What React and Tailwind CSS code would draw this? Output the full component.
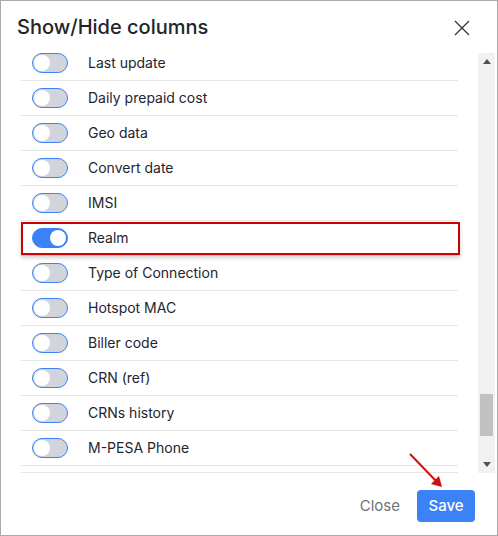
import React from "react";

const items = [
  "Last update",
  "Daily prepaid cost",
  "Geo data",
  "Convert date",
  "IMSI",
  "Realm",
  "Type of Connection",
  "Hotspot MAC",
  "Biller code",
  "CRN (ref)",
  "CRNs history",
  "M-PESA Phone",
];

function Toggle({ on }) {
  return (
    <div
      className={
        "w-[36px] h-[20px] rounded-full border border-[#3b82f6] flex items-center px-[1px] " +
        (on ? "bg-[#3b82f6] justify-end" : "bg-[#d1d5db] justify-start")
      }
    >
      <div className="w-[16px] h-[16px] rounded-full bg-white" />
    </div>
  );
}

export default function App() {
  return (
    <div
      className="w-[498px] h-[536px] border border-[#a9a9a9] bg-white flex flex-col relative"
      style={{ fontFamily: "Inter, 'Noto Sans', sans-serif" }}
    >
      <div className="h-[52px] flex items-center justify-between pl-[16px] pr-[27px] shrink-0">
        <div className="text-[20px] text-[#212529] font-medium leading-none mb-[1px]">Show/Hide columns</div>
        <svg width="16" height="16" viewBox="0 0 16 16" className="mt-[1px]">
          <path d="M1 1 L15 15 M15 1 L1 15" stroke="#3a3a3a" strokeWidth="1.4" fill="none" />
        </svg>
      </div>
      <div className="h-[420px] flex shrink-0">
        <div className="ml-[20px] w-[437px] border-b border-[#e6e6e6] overflow-y-clip overflow-x-visible">
          <div className="-mt-[7px]">
            {items.map((it) => (
              <div
                key={it}
                className="h-[35px] border-b border-[#e6e6e6] flex items-center relative"
              >
                <div className="ml-[11px]">
                  <Toggle on={it === "Realm"} />
                </div>
                <span className="ml-[20px] text-[14px] text-[#24242e] mb-[2px]">{it}</span>
                {it === "Realm" && (
                  <div className="absolute left-0 top-[1px] w-[439px] h-[33px] border-2 border-[#cc0000] shadow-[0_3px_4px_rgba(0,0,0,0.18)]" />
                )}
              </div>
            ))}
            <div className="h-[35px]" />
          </div>
        </div>
        <div className="ml-[20px] w-[17px] bg-[#f1f1f1] flex flex-col items-center">
          <div className="h-[17px] flex items-center justify-center">
            <svg width="8" height="5" viewBox="0 0 8 5"><path d="M0 5 L4 0 L8 5 Z" fill="#505050" /></svg>
          </div>
          <div className="flex-1 w-full flex flex-col">
            <div className="flex-1" />
            <div className="mx-[2px] h-[42px] bg-[#c1c1c1]" />
            <div className="h-[20px]" />
          </div>
          <div className="h-[17px] flex items-center justify-center">
            <svg width="8" height="5" viewBox="0 0 8 5"><path d="M0 0 L8 0 L4 5 Z" fill="#505050" /></svg>
          </div>
        </div>
      </div>
      <div className="flex-1 flex items-start justify-end pt-[17px] pr-[22px]">
        <button className="text-[15px] text-[#6c757d] h-[32px] px-[0px] mr-[17px]">Close</button>
        <button className="text-[15px] text-white bg-[#3b82f6] h-[32px] w-[58px] rounded-[4px] font-medium">Save</button>
      </div>
      <svg className="absolute left-[405px] top-[450px]" width="42" height="42" viewBox="0 0 42 42">
        <path d="M4 3 L31 31" stroke="#d10f0f" strokeWidth="2" fill="none" />
        <path d="M36 36 L25 33 L33 25 Z" fill="#d10f0f" />
      </svg>
    </div>
  );
}
